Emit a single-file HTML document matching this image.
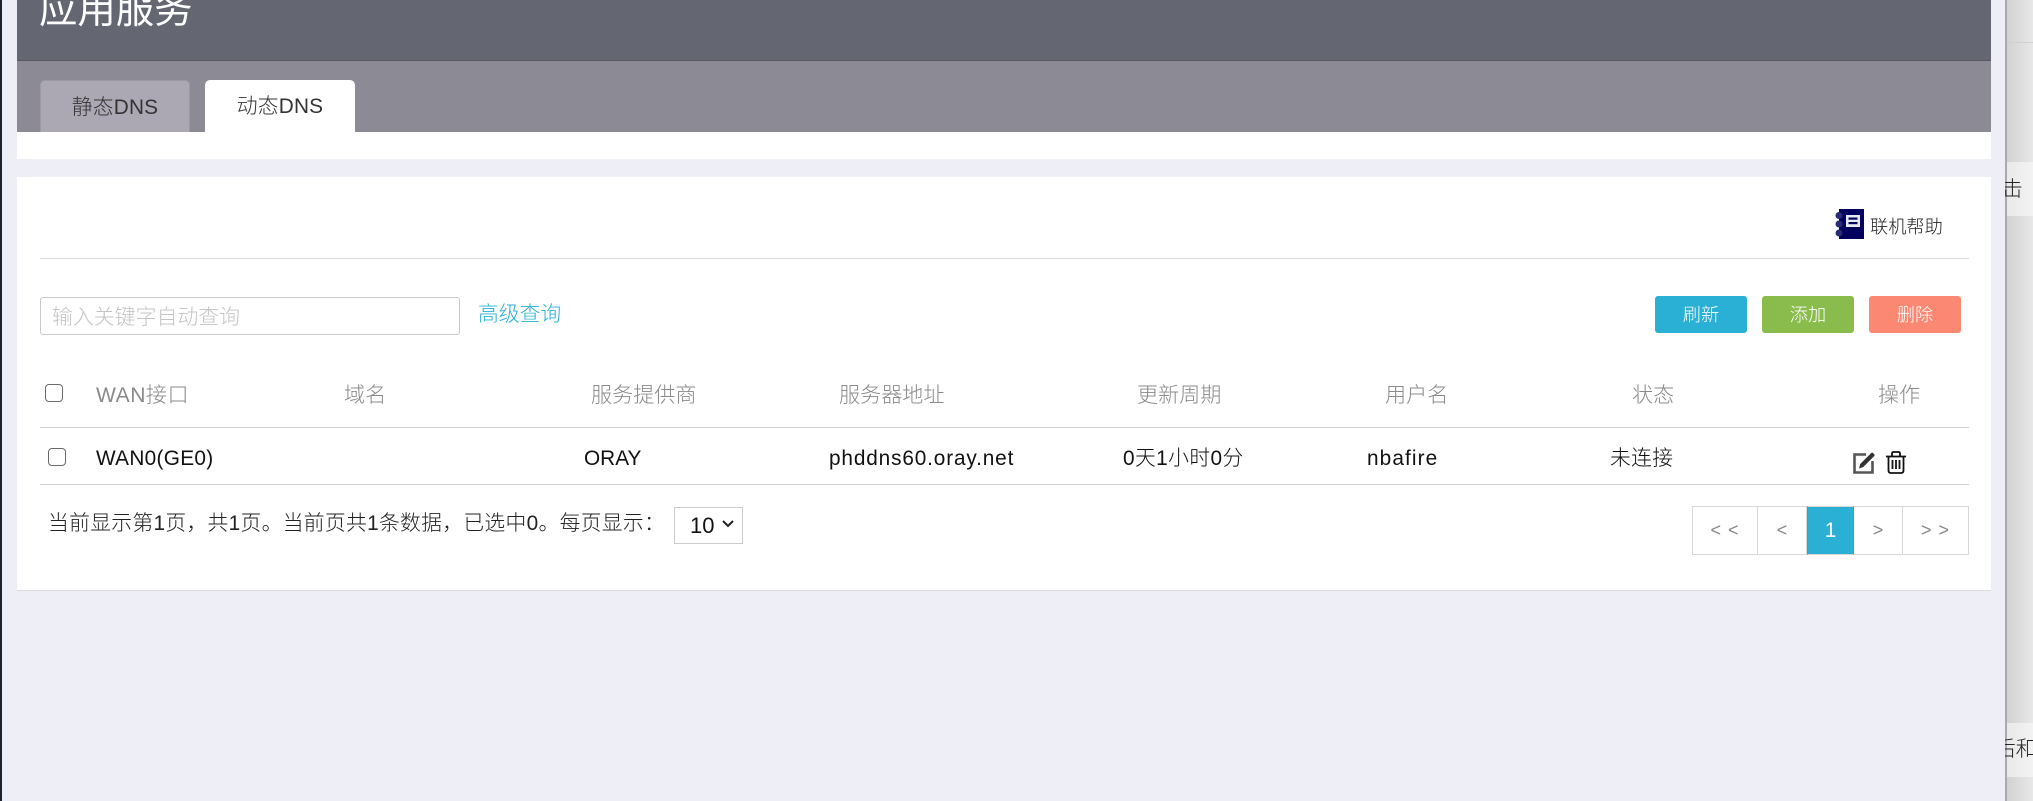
<!DOCTYPE html>
<html lang="zh-CN">
<head>
<meta charset="utf-8">
<title>应用服务</title>
<style>
html,body{margin:0;padding:0;width:2033px;height:801px;overflow:hidden;background:#eeeef7;}
body{position:relative;font-family:"Liberation Sans","Noto Sans CJK SC",sans-serif;font-weight:300;color:#222;}
.a{position:absolute;}
.t{position:absolute;white-space:nowrap;line-height:1;}
.h{color:#8a8a8a;font-size:21.1px;top:385px;}
.r{color:#111;font-size:20.8px;top:449px;}
.btn{position:absolute;top:296px;width:92px;height:37px;border-radius:3px;color:#fff;font-size:18.2px;line-height:39px;text-align:center;}
.pg{position:absolute;top:506px;height:49px;box-sizing:border-box;border:1px solid #d8d8d8;border-left:0;background:#fff;color:#888;font-size:18px;line-height:47px;text-align:center;}
.cb{position:absolute;width:18px;height:18px;box-sizing:border-box;border:1.5px solid #6a6a6a;border-radius:4px;background:#fff;}
</style>
</head>
<body>
<div class="a" style="left:0;top:0;width:2px;height:801px;background:#1c2230;"></div>

<!-- right side background window -->
<div class="a" style="left:2005px;top:0;width:2px;height:801px;background:#a9a9ae;"></div>
<div class="a" style="left:2007px;top:0;width:26px;height:801px;background:linear-gradient(90deg,#d2d2d2,#e8e8e8);"></div>
<div class="a" style="left:2007px;top:42px;width:26px;height:1px;background:#d0d0d0;"></div>
<div class="a" style="left:2007px;top:162px;width:26px;height:54px;background:linear-gradient(90deg,#e9e9e9,#f3f3f3);"></div>
<div class="a" style="left:2007px;top:723px;width:26px;height:54px;background:linear-gradient(90deg,#e9e9e9,#f3f3f3);"></div>
<div class="a" style="left:2005px;top:162px;width:28px;height:54px;overflow:hidden;"><span class="t" style="left:-3px;top:18px;font-size:20.8px;color:#222;">击</span></div>
<div class="a" style="left:2005px;top:723px;width:28px;height:54px;overflow:hidden;"><span class="t" style="left:-10px;top:17px;font-size:20.8px;color:#222;">后和</span></div>

<!-- header -->
<div class="a" style="left:17px;top:0;width:1974px;height:60px;background:#646672;"></div>
<div class="a" style="left:17px;top:60px;width:1974px;height:1px;background:#565864;"></div>
<div class="t" style="left:39px;top:-8px;font-size:38.4px;color:#fff;font-weight:400;">应用服务</div>
<div class="a" style="left:17px;top:61px;width:1974px;height:71px;background:#8c8a94;"></div>
<div class="a" style="left:40px;top:80px;width:150px;height:53px;box-sizing:border-box;border:1px solid #9d9aa5;border-bottom:0;background:#aba8b3;border-radius:5px 5px 0 0;color:#333;font-size:20.8px;line-height:53px;text-align:center;letter-spacing:.2px;">静态DNS</div>
<div class="a" style="left:205px;top:80px;width:150px;height:52px;background:#fff;border-radius:5px 5px 0 0;color:#333;font-size:20.8px;line-height:54px;text-align:center;letter-spacing:.2px;">动态DNS</div>
<div class="a" style="left:17px;top:132px;width:1974px;height:27px;background:#fff;"></div>

<!-- main panel -->
<div class="a" style="left:17px;top:177px;width:1974px;height:414px;box-sizing:border-box;background:#fff;border-bottom:1px solid #dcdcdc;"></div>

<!-- help -->
<svg class="a" style="left:1835px;top:209px;" width="29" height="30" viewBox="0 0 29 30">
<rect x="4" y="0" width="25" height="30" fill="#04005e"/>
<rect x="11" y="6" width="14" height="12" fill="#e8e8f2"/>
<rect x="13.5" y="8.5" width="9" height="2.2" fill="#04005e"/>
<rect x="13.5" y="13" width="9" height="2.2" fill="#04005e"/>
<circle cx="4" cy="6.500" r="3.500" fill="#2a2a78"/>
<circle cx="4" cy="15" r="3.500" fill="#2a2a78"/>
<circle cx="4" cy="24" r="3.500" fill="#2a2a78"/>
</svg>
<div class="t" style="left:1870px;top:218px;font-size:18.2px;color:#222;">联机帮助</div>
<div class="a" style="left:40px;top:258px;width:1929px;height:1px;background:#d9d9d9;"></div>

<!-- search -->
<div class="a" style="left:40px;top:297px;width:420px;height:38px;box-sizing:border-box;border:1.5px solid #c9c9c9;border-radius:3px;background:#fff;"></div>
<div class="t" style="left:52px;top:308px;font-size:20.9px;color:#c4c4c4;">输入关键字自动查询</div>
<div class="t" style="left:478px;top:305px;font-size:20.8px;color:#29b0d4;">高级查询</div>

<div class="btn" style="left:1655px;background:#29b0d4;">刷新</div>
<div class="btn" style="left:1762px;background:#8abc4d;">添加</div>
<div class="btn" style="left:1869px;background:#fa8872;">删除</div>

<!-- table head -->
<div class="cb" style="left:45px;top:384px;"></div>
<div class="t h" style="left:96px;letter-spacing:.5px;">WAN接口</div>
<div class="t h" style="left:344px;">域名</div>
<div class="t h" style="left:591px;">服务提供商</div>
<div class="t h" style="left:839px;">服务器地址</div>
<div class="t h" style="left:1137px;">更新周期</div>
<div class="t h" style="left:1385px;">用户名</div>
<div class="t h" style="left:1632px;">状态</div>
<div class="t h" style="left:1878px;">操作</div>
<div class="a" style="left:40px;top:427px;width:1929px;height:1px;background:#cfcfcf;"></div>

<!-- row -->
<div class="cb" style="left:48px;top:448px;"></div>
<div class="t r" style="left:96px;letter-spacing:.3px;">WAN0(GE0)</div>
<div class="t r" style="left:584px;">ORAY</div>
<div class="t r" style="left:829px;letter-spacing:.85px;">phddns60.oray.net</div>
<div class="t r" style="left:1123px;letter-spacing:.4px;">0天1小时0分</div>
<div class="t r" style="left:1367px;letter-spacing:1.1px;">nbafire</div>
<div class="t r" style="left:1610px;letter-spacing:.3px;">未连接</div>
<svg class="a" style="left:1853px;top:451px;" width="23" height="23" viewBox="0 0 23 23">
<path d="M13 3.500H1.500V21.500H19.500V10" fill="none" stroke="#555" stroke-width="2.600"/>
<path d="M6 17.500l1.200-4.500L18 2.200a1.500 1.500 0 0 1 2.200 0l.8.800a1.500 1.500 0 0 1 0 2.200L10.300 16z" fill="#333"/>
</svg>
<svg class="a" style="left:1885px;top:451px;" width="22" height="23" viewBox="0 0 22 23">
<path d="M1 5.500H21M7 5V2.500Q7 1 8.500 1H13.500Q15 1 15 2.500V5" fill="none" stroke="#111" stroke-width="1.800"/>
<path d="M3.500 5.500V19.500Q3.500 22 6 22H16Q18.500 22 18.500 19.500V5.500" fill="none" stroke="#111" stroke-width="1.800"/>
<path d="M7.500 9V18M11 9V18M14.500 9V18" stroke="#111" stroke-width="1.800"/>
</svg>
<div class="a" style="left:40px;top:484px;width:1929px;height:1px;background:#cfcfcf;"></div>

<!-- footer -->
<div class="t" style="left:48px;top:514px;font-size:20.8px;letter-spacing:.3px;color:#222;">当前显示第1页，共1页。当前页共1条数据，已选中0。每页显示：</div>
<div class="a" style="left:674px;top:507px;width:69px;height:37px;box-sizing:border-box;border:1px solid #ccc;background:#fff;"></div>
<div class="t" style="left:690px;top:515px;font-size:22px;color:#111;">10</div>
<svg class="a" style="left:721px;top:519px;" width="14" height="10" viewBox="0 0 14 10"><path d="M2 2l5 5 5-5" fill="none" stroke="#222" stroke-width="2"/></svg>

<div class="pg" style="left:1692px;width:66px;border-left:1px solid #d8d8d8;letter-spacing:1px;">&lt; &lt;</div>
<div class="pg" style="left:1758px;width:49px;">&lt;</div>
<div class="pg" style="left:1807px;width:47px;background:#29b0d4;color:#fff;border-color:#d8d8d8;border-right-color:#29a8cc;border-left:1px solid #29a8cc;font-weight:400;font-size:20.8px;">1</div>
<div class="pg" style="left:1854px;width:49px;">&gt;</div>
<div class="pg" style="left:1903px;width:66px;letter-spacing:1px;">&gt; &gt;</div>
</body>
</html>
